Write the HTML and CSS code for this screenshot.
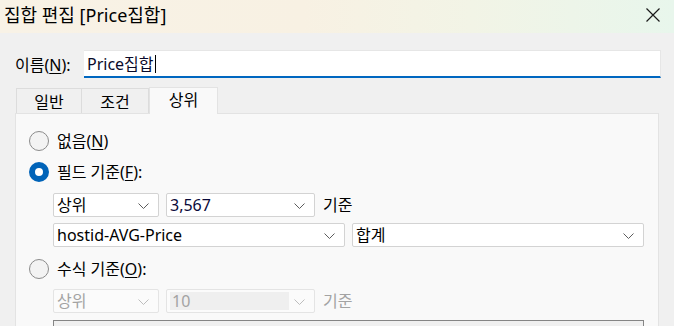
FILE: index.html
```html
<!DOCTYPE html>
<html lang="ko">
<head>
<meta charset="utf-8">
<link rel="stylesheet" href="styles.css">
</head>
<body>
<div class="window">
  <div class="titlebar">
    <span class="title">집합 편집 [Price집합]</span>
    <svg class="close" width="16" height="16" viewBox="0 0 16 16"><path d="M1.5 1.5 L14.5 14.5 M14.5 1.5 L1.5 14.5" stroke="#1a1a1a" stroke-width="1.2" fill="none"/></svg>
  </div>
  <div class="content">
    <div class="name-row">
      <label class="name-label">이름(<u>N</u>):</label>
      <div class="name-input"><span class="name-text">Price집합</span><span class="caret"></span></div>
    </div>
    <div class="tabs">
      <div class="tab">일반</div>
      <div class="tab">조건</div>
      <div class="tab active">상위</div>
    </div>
    <div class="panel">
      <div class="radio-row r1"><span class="radio"></span><span class="rlabel">없음(<u>N</u>)</span></div>
      <div class="radio-row r2"><span class="radio checked"></span><span class="rlabel">필드 기준(<u>F</u>):</span></div>
      <div class="sel-row s1">
        <div class="select w106"><span class="val">상위</span><svg class="chev" width="11" height="6" viewBox="0 0 11 6"><path d="M0.5 0.5 L5.5 5.5 L10.5 0.5" stroke="#5c5c5c" fill="none"/></svg></div>
        <div class="select w149"><span class="val blue">3,567</span><svg class="chev" width="11" height="6" viewBox="0 0 11 6"><path d="M0.5 0.5 L5.5 5.5 L10.5 0.5" stroke="#5c5c5c" fill="none"/></svg></div>
        <span class="after">기준</span>
      </div>
      <div class="sel-row s2">
        <div class="select w292"><span class="val">hostid-AVG-Price</span><svg class="chev" width="11" height="6" viewBox="0 0 11 6"><path d="M0.5 0.5 L5.5 5.5 L10.5 0.5" stroke="#5c5c5c" fill="none"/></svg></div>
        <div class="select w292"><span class="val">합계</span><svg class="chev" width="11" height="6" viewBox="0 0 11 6"><path d="M0.5 0.5 L5.5 5.5 L10.5 0.5" stroke="#5c5c5c" fill="none"/></svg></div>
      </div>
      <div class="radio-row r3"><span class="radio"></span><span class="rlabel">수식 기준(<u>O</u>):</span></div>
      <div class="sel-row s3 disabled">
        <div class="select w106"><span class="val">상위</span><svg class="chev" width="11" height="6" viewBox="0 0 11 6"><path d="M0.5 0.5 L5.5 5.5 L10.5 0.5" stroke="#bdbdbd" fill="none"/></svg></div>
        <div class="select w149 filled"><span class="val fill">10</span><svg class="chev" width="11" height="6" viewBox="0 0 11 6"><path d="M0.5 0.5 L5.5 5.5 L10.5 0.5" stroke="#bdbdbd" fill="none"/></svg></div>
        <span class="after">기준</span>
      </div>
      <div class="formula-box"></div>
    </div>
  </div>
</div>
</body>
</html>
```
FILE: styles.css
```css
* { box-sizing: border-box; }
html, body { margin: 0; padding: 0; }
body {
  width: 674px;
  height: 326px;
  overflow: hidden;
  background: #f0f0f0;
  font-family: "Noto Sans", "Noto Sans CJK KR", sans-serif;
  font-size: 16px;
  font-weight: 400;
  color: #000;
}
.window { width: 674px; height: 326px; }
.titlebar {
  height: 33px;
  display: flex;
  align-items: center;
  justify-content: space-between;
  padding: 0 13px 0 4px;
  background: linear-gradient(90deg, #f8f2e6 0%, #f8f1e3 45%, #f2f4e6 70%, #e8f6ec 100%);
}
.title { font-size: 18px; line-height: 22px; margin-top: -3px; }
.close { margin-top: -4px; }
.content { padding: 17px 13px 0 15px; }
.name-row { display: flex; align-items: center; height: 28px; }
.name-label { width: 69px; line-height: 20px; padding-top: 1px; }
.name-label u, .rlabel u { text-underline-offset: 2px; }
.name-input {
  flex: 1;
  height: 28px;
  background: #fff;
  border-top: 1px solid #e6e6e6;
  border-right: 1px solid #e6e6e6;
  border-bottom: 2px solid #0067c0;
  display: flex;
  align-items: center;
  padding-left: 3px;
}
.name-text { line-height: 20px; color: #0a0a2a; }
.caret { width: 1px; height: 18px; background: #000; margin-left: 1px; }
.tabs { display: flex; align-items: flex-end; height: 26px; margin-top: 9px; padding-left: 1px; }
.tab {
  height: 25px;
  background: #f0f0f0;
  border: 1px solid #dcdcdc;
  border-bottom: none;
  display: flex;
  align-items: center;
  justify-content: center;
  line-height: 20px;
  padding-top: 1px;
}
.tab:nth-child(1) { width: 66px; }
.tab:nth-child(2) { width: 67px; border-left: none; }
.tab.active {
  width: 69px;
  height: 27px;
  background: #f9f9f9;
  border-color: #e3e3e3;
  margin-bottom: -1px;
  position: relative;
  z-index: 1;
  padding-top: 0;
  padding-bottom: 2px;
}
.panel {
  width: 644px;
  height: 220px;
  background: #f9f9f9;
  border: 1px solid #e3e3e3;
  padding: 17px 0 0 13px;
  display: flex;
  flex-direction: column;
}
.radio-row { display: flex; align-items: center; height: 20px; }
.r2 { margin-top: 11px; }
.r3 { margin-top: 12px; }
.radio {
  width: 20px;
  height: 20px;
  border-radius: 50%;
  border: 1px solid #8b8b8b;
  background: #f3f3f3;
  flex: none;
}
.radio.checked {
  border: 6px solid #0063b8;
  background: #fff;
}
.rlabel { margin-left: 8px; line-height: 20px; }
.sel-row { display: flex; align-items: center; gap: 7px; padding-left: 24px; height: 24px; }
.s1 { margin-top: 11px; }
.s2 { margin-top: 6px; }
.s3 { margin-top: 10px; }
.select {
  height: 24px;
  background: #fff;
  border: 1px solid #d3d3d3;
  border-radius: 2px;
  display: flex;
  align-items: center;
  justify-content: space-between;
  padding: 0 9px 0 3px;
}
.w106 { width: 106px; }
.w149 { width: 149px; }
.w292 { width: 292px; }
.val { line-height: 20px; }
.blue { color: #0a0a3a; }
.chev { flex: none; margin-top: 1px; }
.after { line-height: 20px; margin-left: 1px; }
.disabled .select { background: #fbfbfb; border-color: #e4e4e4; }
.disabled .val, .disabled .after { color: #a3a3a3; }
.select.filled { padding-left: 3px; }
.val.fill {
  background: #efefef;
  width: 119px;
  height: 18px;
  padding-left: 2px;
  display: flex;
  align-items: center;
}
.formula-box {
  margin-top: 7px;
  margin-left: 24px;
  width: 591px;
  height: 40px;
  border: 1px solid #858585;
  background: #f0f0f0;
}
```
